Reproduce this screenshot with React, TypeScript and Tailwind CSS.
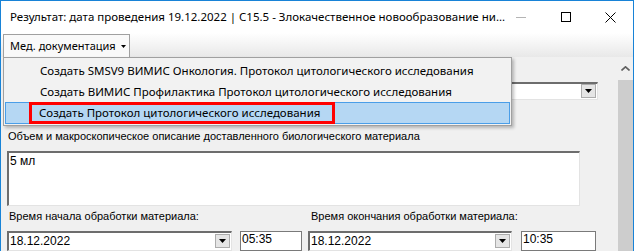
import React from "react";

const ui = { fontFamily: '"Noto Sans", "Open Sans", sans-serif' };
const ms = { fontFamily: '"Liberation Sans", Arial, sans-serif' };

function DropButton() {
  return (
    <div className="flex h-[14px] w-[15px] items-center justify-center border border-[#acacac] bg-[#e5e5e5]">
      <svg width="7" height="4" viewBox="0 0 7 4">
        <path d="M0 0h7L3.5 4z" fill="#000" />
      </svg>
    </div>
  );
}

function DateBox({ value, className }: { value: string; className: string }) {
  return (
    <div
      className={`flex h-[20px] items-start justify-between border-b border-l-2 border-r border-t-2 border-b-[#e3e3e3] border-l-[#6d6d6d] border-r-[#e3e3e3] border-t-[#6d6d6d] bg-white pr-[1px] pt-[1px] ${className}`}
    >
      <span className="pl-[1px] text-[12px] leading-[14px] text-black">{value}</span>
      <DropButton />
    </div>
  );
}

function TimeBox({ value, className }: { value: string; className: string }) {
  return (
    <div className={`h-[20px] border border-[#7a7a7a] bg-white pl-[1px] text-[12px] leading-[14px] text-black ${className}`}>
      {value}
    </div>
  );
}

export default function App() {
  const items = [
    "Создать SMSV9 ВИМИС Онкология. Протокол цитологического исследования",
    "Создать ВИМИС Профилактика Протокол цитологического исследования",
  ];

  return (
    <div className="relative flex h-[251px] w-[634px] flex-col overflow-hidden border-x border-t border-[#1883d7] bg-white">
      <div className="flex h-[32px] shrink-0 items-center bg-white pl-[9px]" style={ui}>
        <span className="min-w-0 flex-1 whitespace-nowrap text-[11.5px] text-black">
          Результат: дата проведения 19.12.2022 | C15.5 - Злокачественное новообразование ни...
        </span>
        <div className="flex shrink-0 items-center">
          <div className="flex w-[45px] justify-center">
            <div className="h-px w-[10px] bg-[#b4b4b4]" />
          </div>
          <div className="flex w-[45px] justify-center">
            <div className="h-[10px] w-[10px] border border-black" />
          </div>
          <div className="flex w-[45px] justify-center">
            <svg width="11" height="11" viewBox="0 0 11 11">
              <path d="M0.5 0.5l10 10M10.5 0.5l-10 10" stroke="#000" strokeWidth="1" />
            </svg>
          </div>
        </div>
      </div>

      <div className="flex h-[24px] shrink-0 items-end bg-gradient-to-b from-white to-[#e8e8e8] pl-[2px]" style={ui}>
        <div className="flex h-[23px] items-center gap-[5px] whitespace-nowrap border-x border-t border-[#a0a0a0] bg-[#f9f9f9] pl-[6px] pr-[3px]">
          <span className="text-[11px] text-black">Мед. документация</span>
          <svg width="5" height="3" viewBox="0 0 5 3" className="shrink-0">
            <path d="M0 0h5L2.5 3z" fill="#000" />
          </svg>
        </div>
      </div>

      <div className="flex min-h-0 flex-1 bg-[#f0f0f0]" style={ms}>
        <div className="flex flex-1 flex-col pl-[6px] pr-[20px]">
          <div className="mt-[25px] flex h-[19px] items-start justify-end border-b border-l-2 border-r border-t-2 border-b-[#e3e3e3] border-l-[#6d6d6d] border-r-[#e3e3e3] border-t-[#6d6d6d] bg-white pr-[1px]">
            <DropButton />
          </div>
          <div className="mt-[30px] h-[13px] pl-[1px] text-[11px] leading-[13px] text-black">
            Объем и макроскопическое описание доставленного биологического материала
          </div>
          <div className="mr-[18px] mt-[8px] h-[58px] border-b border-l-2 border-r border-t-2 border-b-[#e3e3e3] border-l-[#6d6d6d] border-r-[#e3e3e3] border-t-[#6d6d6d] bg-white pl-[1px] pt-[1px] text-[12px] leading-[14px] text-black">
            5 мл
          </div>
          <div className="mt-[4px] flex h-[13px] text-[11px] leading-[13px] text-black">
            <span className="w-[302px] pl-[2px]">Время начала обработки материала:</span>
            <span className="pl-[2px]">Время окончания обработки материала:</span>
          </div>
          <div className="mt-[8px] flex">
            <DateBox value="18.12.2022" className="w-[225px]" />
            <TimeBox value="05:35" className="ml-[8px] w-[62px]" />
            <DateBox value="18.12.2022" className="ml-[6px] w-[204px]" />
            <TimeBox value="10:35" className="ml-[9px] w-[75px]" />
          </div>
        </div>
        <div className="flex w-[15px] flex-col">
          <div className="flex h-[23px] items-center justify-center">
            <svg width="9" height="5" viewBox="0 0 9 5">
              <path d="M0.5 4.5L4.5 0.8L8.5 4.5" stroke="#606060" strokeWidth="1.6" fill="none" />
            </svg>
          </div>
          <div className="flex-1 bg-[#cdcdcd]" />
        </div>
      </div>

      <div
        className="absolute left-[2px] top-[56px] flex w-[509px] flex-col border border-[#a0a0a0] bg-[#f2f2f2] pb-[1px] pt-[2px] shadow-[2px_2px_3px_rgba(0,0,0,0.25)]"
        style={ui}
      >
        {items.map((item) => (
          <div key={item} className="flex h-[21px] items-center pl-[36px] text-[11.5px] text-black">
            {item}
          </div>
        ))}
        <div className="mx-[1px] flex h-[22px] items-center border border-[#4a9ee8] bg-[#b5d7f3] pl-[23px]">
          <span className="border-[3px] border-[#ff0000] pl-[7px] pr-[12px] text-[11.5px] leading-[16px] text-black">
            Создать Протокол цитологического исследования
          </span>
        </div>
      </div>
    </div>
  );
}
